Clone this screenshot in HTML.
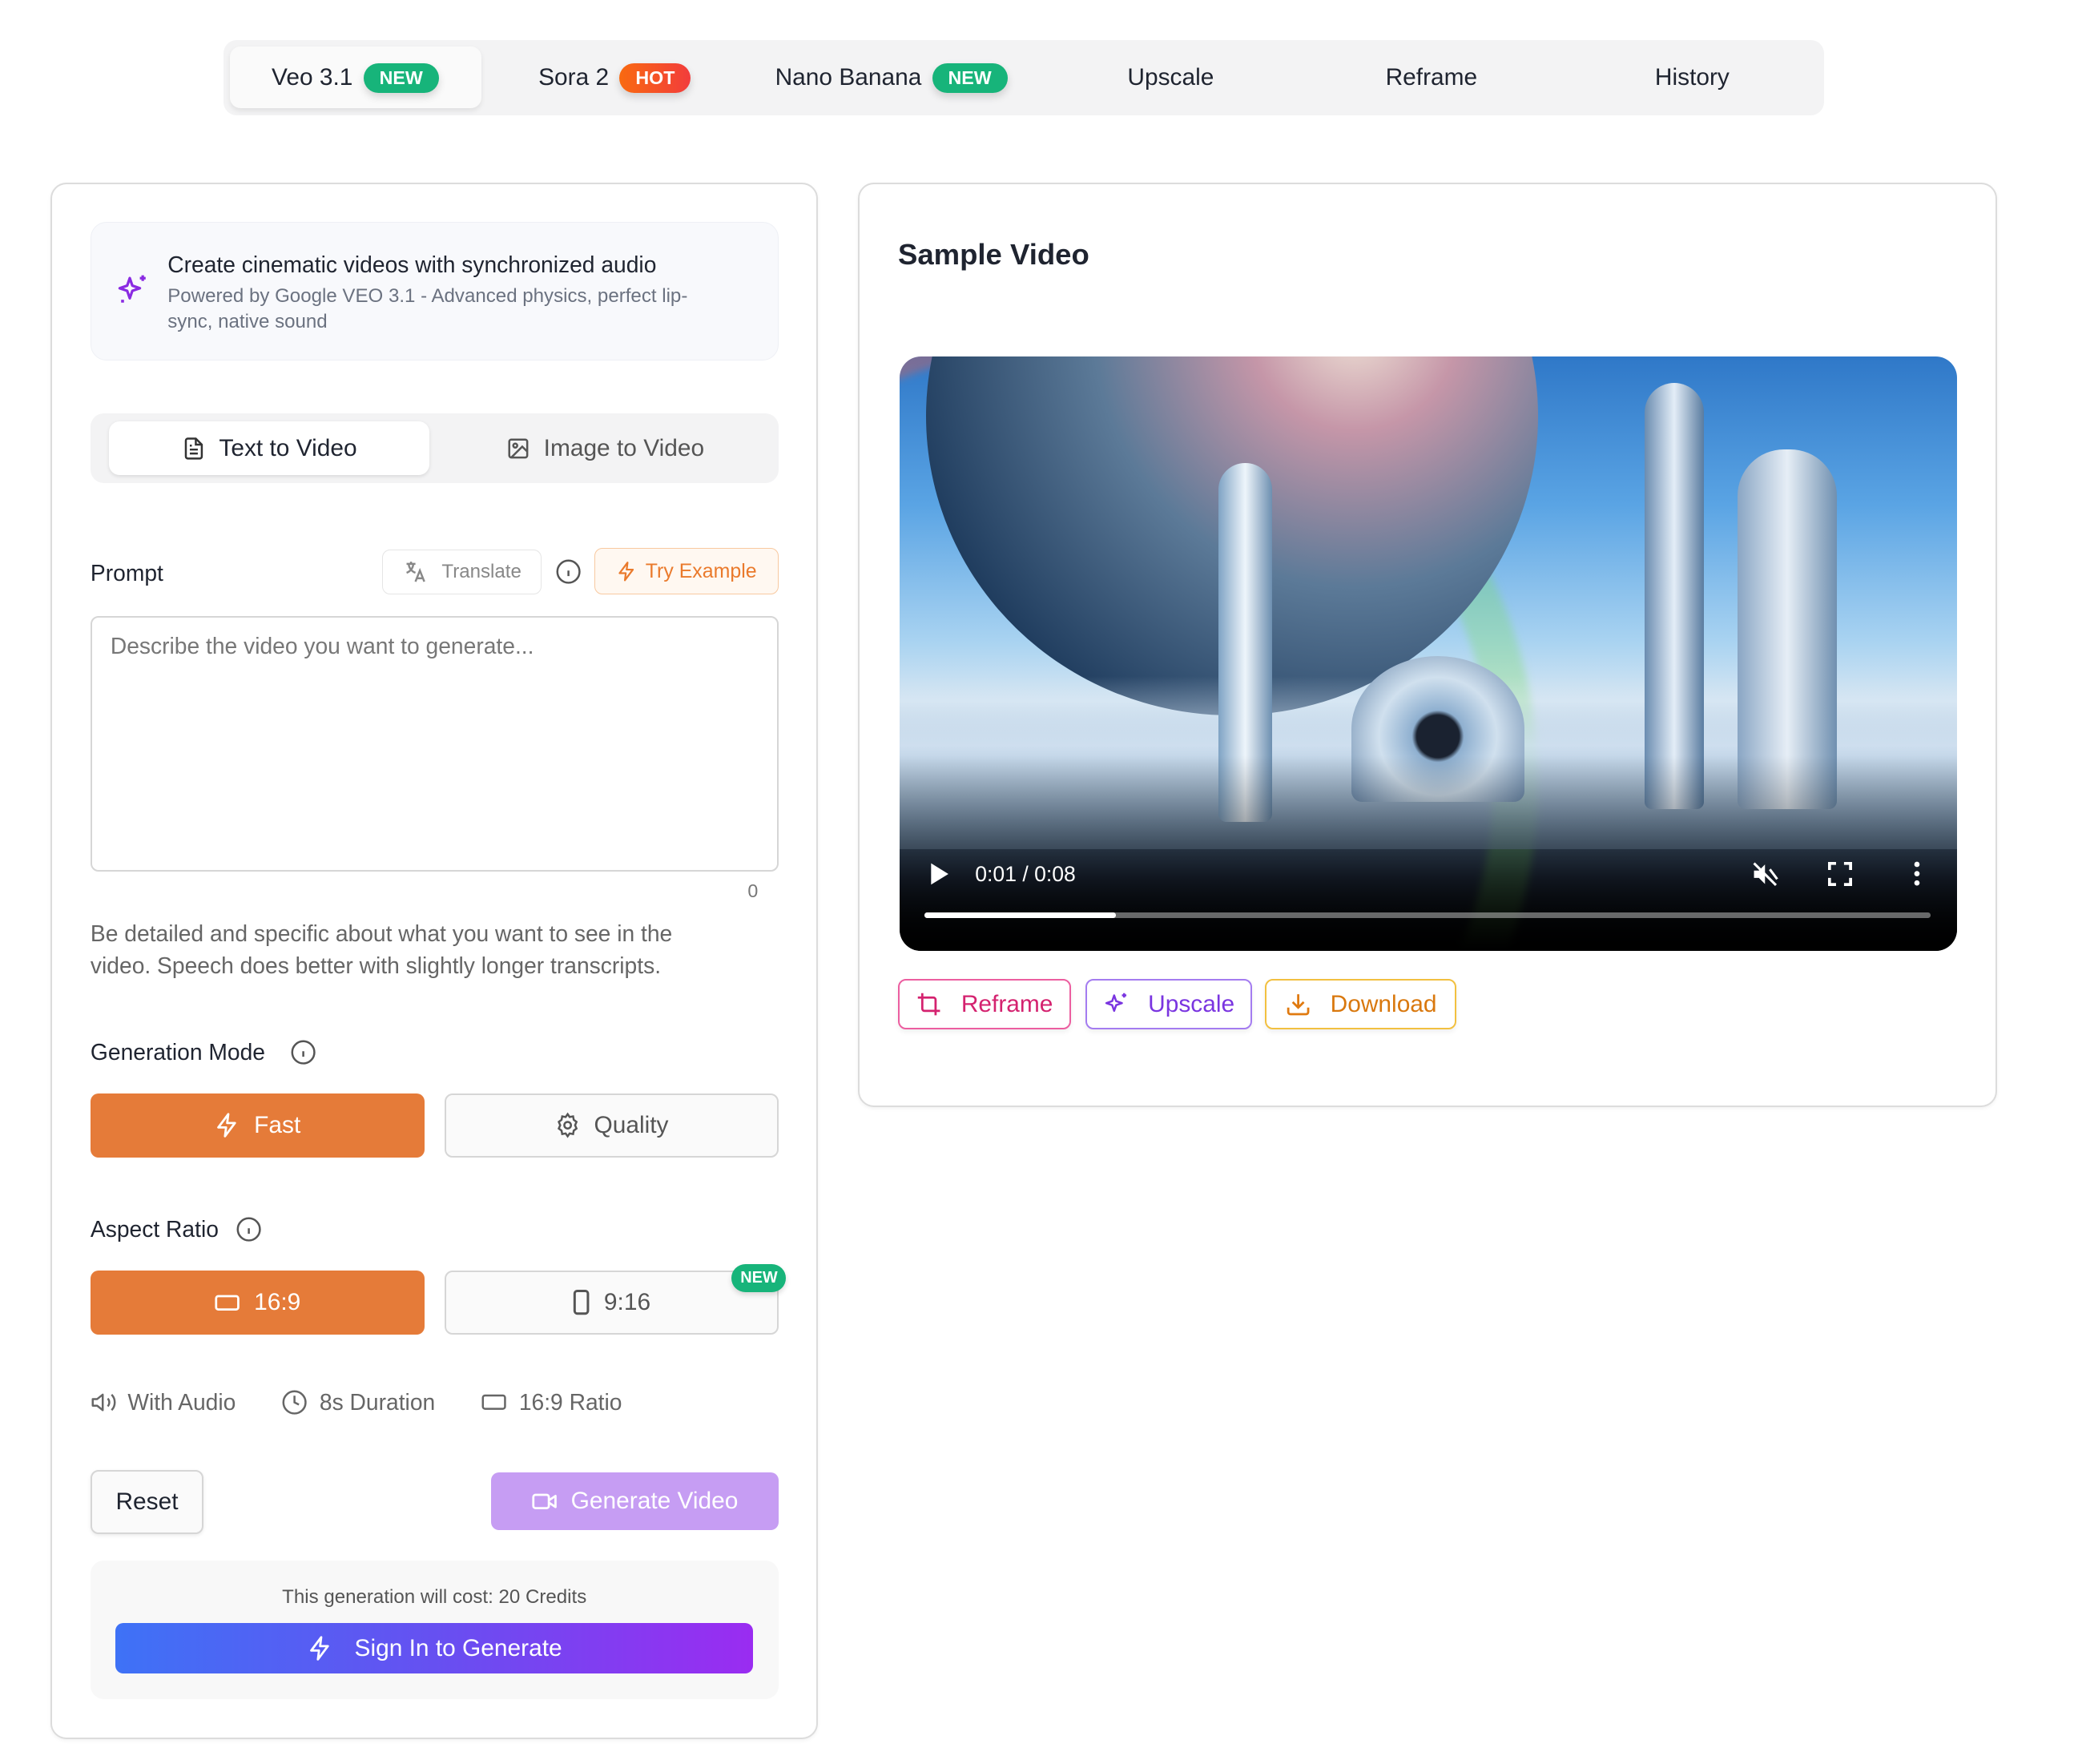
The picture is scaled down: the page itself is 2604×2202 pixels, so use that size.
<!DOCTYPE html>
<html><head><meta charset="utf-8"><style>
*{box-sizing:border-box;margin:0;padding:0}
html,body{width:2604px;height:2202px;overflow:hidden;background:#fff}
#root{zoom:1.66071;width:1568px;height:1326px;position:relative;font-family:"Liberation Sans",sans-serif;color:#1f2430}
.abs{position:absolute}
.tabs{left:168px;top:30px;width:1203px;height:57px;background:#f3f3f4;border-radius:10px}
.tab{position:absolute;top:0;height:57px;display:flex;align-items:center;justify-content:center;font-size:18px;color:#1f2430;gap:8px}
.badge{color:#fff;font-size:14px;font-weight:bold;padding:3px 12px;border-radius:14px;box-shadow:0 3px 6px rgba(0,0,0,.15)}
.card{border:1.5px solid #dcdcdc;border-radius:12px;background:#fff;box-shadow:0 1px 3px rgba(0,0,0,.05)}
.btn{position:absolute;display:flex;align-items:center;justify-content:center;gap:10px;border-radius:6px;font-size:18px}
svg{display:block}
</style></head><body><div id="root">

<div class="abs tabs">
 <div class="abs" style="left:5px;top:5px;width:189px;height:46px;background:#fafafa;border-radius:8px;box-shadow:0 2px 4px rgba(0,0,0,.08)"></div>
 <div class="tab" style="left:4px;width:190px">Veo 3.1 <span class="badge" style="background:#17b47a">NEW</span></div>
 <div class="tab" style="left:196px;width:196px">Sora 2 <span class="badge" style="background:linear-gradient(90deg,#f96a10,#f23c3c)">HOT</span></div>
 <div class="tab" style="left:392px;width:220px">Nano Banana <span class="badge" style="background:#17b47a">NEW</span></div>
 <div class="tab" style="left:612px;width:200px">Upscale</div>
 <div class="tab" style="left:810px;width:196px">Reframe</div>
 <div class="tab" style="left:1006px;width:196px">History</div>
</div>

<div class="abs card" style="left:38px;top:137px;width:577px;height:1170px"></div>
<div class="abs" style="left:68px;top:167px;width:517px;height:104px;background:#f8f9fc;border:1px solid #eef0f5;border-radius:12px"></div>
<svg class="abs" style="left:87px;top:205px" width="26" height="26" viewBox="0 0 24 24" fill="none" stroke="#8a2be2" stroke-width="1.8" stroke-linejoin="round"><path d="M10 4l1.8 5.2L17 11l-5.2 1.8L10 18l-1.8-5.2L3 11l5.2-1.8z"/><path d="M19 2v4M17 4h4M5 19v2M4 20h2"/></svg>
<div class="abs" style="left:126px;top:189px;font-size:17px;color:#1f2430">Create cinematic videos with synchronized audio</div>
<div class="abs" style="left:126px;top:213px;width:415px;font-size:14.5px;line-height:19.5px;color:#6b7280">Powered by Google VEO 3.1 - Advanced physics, perfect lip-sync, native sound</div>

<div class="abs" style="left:68px;top:311px;width:517px;height:52px;background:#f3f3f4;border-radius:10px"></div>
<div class="abs" style="left:82px;top:317px;width:241px;height:40px;background:#fff;border-radius:8px;box-shadow:0 1px 3px rgba(0,0,0,.1)"></div>
<div class="btn" style="left:82px;top:317px;width:241px;height:40px;color:#1f2430"><svg width="18" height="18" viewBox="0 0 24 24" fill="none" stroke="#333" stroke-width="2"><path d="M14 2H6a2 2 0 0 0-2 2v16a2 2 0 0 0 2 2h12a2 2 0 0 0 2-2V8z"/><path d="M14 2v6h6M8 13h8M8 17h8M8 9h2"/></svg>Text to Video</div>
<div class="btn" style="left:330px;top:317px;width:250px;height:40px;color:#555"><svg width="18" height="18" viewBox="0 0 24 24" fill="none" stroke="#555" stroke-width="2"><rect x="3" y="3" width="18" height="18" rx="2"/><circle cx="9" cy="9" r="2"/><path d="M21 15l-5-5L5 21"/></svg>Image to Video</div>

<div class="abs" style="left:68px;top:421px;font-size:17px">Prompt</div>
<div class="btn" style="left:287px;top:413px;width:120px;height:34px;border:1px solid #e5e5e5;font-size:14.5px;color:#888;gap:10px"><svg width="20" height="20" viewBox="0 0 24 24" fill="none" stroke="#888" stroke-width="1.8"><path d="M4 5h8M8 3v2M6 5c0 4 3 7 6 8M10 5c0 4-3 7-6 8M12 21l4-10 4 10M13.5 18h5"/></svg>Translate</div>
<svg class="abs" style="left:417px;top:420px" width="20" height="20" viewBox="0 0 24 24" fill="none" stroke="#555" stroke-width="1.8"><circle cx="12" cy="12" r="10"/><path d="M12 16v-5M12 8h.01"/></svg>
<div class="btn" style="left:447px;top:412px;width:138px;height:35px;border:1px solid #f8c9a0;background:#fff8f1;font-size:15px;color:#ea7a2c;gap:6px"><svg width="16" height="16" viewBox="0 0 24 24" fill="none" stroke="#ea7a2c" stroke-width="2" stroke-linejoin="round"><path d="M13 2L4 14h7l-1 8 9-12h-7z"/></svg>Try Example</div>

<div class="abs" style="left:68px;top:463px;width:517px;height:192px;border:1.5px solid #d6d6d6;border-radius:6px"></div>
<div class="abs" style="left:83px;top:476px;font-size:17px;color:#777">Describe the video you want to generate...</div>
<div class="abs" style="left:562px;top:662px;font-size:14px;color:#777">0</div>
<div class="abs" style="left:68px;top:690px;width:475px;font-size:17px;line-height:24px;color:#666">Be detailed and specific about what you want to see in the video. Speech does better with slightly longer transcripts.</div>

<div class="abs" style="left:68px;top:781px;font-size:17px">Generation Mode</div>
<svg class="abs" style="left:218px;top:781px" width="20" height="20" viewBox="0 0 24 24" fill="none" stroke="#555" stroke-width="1.8"><circle cx="12" cy="12" r="10"/><path d="M12 16v-5M12 8h.01"/></svg>
<div class="btn" style="left:68px;top:822px;width:251px;height:48px;background:#e57b39;color:#fff"><svg width="20" height="20" viewBox="0 0 24 24" fill="none" stroke="#fff" stroke-width="2" stroke-linejoin="round"><path d="M13 2L4 14h7l-1 8 9-12h-7z"/></svg>Fast</div>
<div class="btn" style="left:334px;top:822px;width:251px;height:48px;border:1.5px solid #d6d6d6;background:#fafafa;color:#555"><svg width="20" height="20" viewBox="0 0 24 24" fill="none" stroke="#555" stroke-width="1.8"><circle cx="12" cy="12" r="3"/><path d="M12 2l1.8 2.6 3.1-.6.6 3.1L20 9l-1.3 3 1.3 3-2.5 1.9-.6 3.1-3.1-.6L12 22l-1.8-2.6-3.1.6-.6-3.1L4 15l1.3-3L4 9l2.5-1.9.6-3.1 3.1.6z"/></svg>Quality</div>

<div class="abs" style="left:68px;top:914px;font-size:17px">Aspect Ratio</div>
<svg class="abs" style="left:177px;top:914px" width="20" height="20" viewBox="0 0 24 24" fill="none" stroke="#555" stroke-width="1.8"><circle cx="12" cy="12" r="10"/><path d="M12 16v-5M12 8h.01"/></svg>
<div class="btn" style="left:68px;top:955px;width:251px;height:48px;background:#e57b39;color:#fff"><svg width="20" height="16" viewBox="0 0 24 18" fill="none" stroke="#fff" stroke-width="2"><rect x="2" y="3" width="20" height="12" rx="2"/></svg>16:9</div>
<div class="btn" style="left:334px;top:955px;width:251px;height:48px;border:1.5px solid #d6d6d6;background:#fafafa;color:#555"><svg width="14" height="20" viewBox="0 0 14 20" fill="none" stroke="#555" stroke-width="1.8"><rect x="2" y="1.5" width="10" height="17" rx="2"/></svg>9:16</div>
<div class="abs" style="left:550px;top:950px;width:41px;height:21px;background:#17b47a;border-radius:11px;color:#fff;font-size:12px;font-weight:bold;display:flex;align-items:center;justify-content:center;box-shadow:0 2px 4px rgba(0,0,0,.15)">NEW</div>

<div class="abs" style="left:68px;top:1044px;display:flex;align-items:center;font-size:17px;color:#666">
<svg width="20" height="20" viewBox="0 0 24 24" fill="none" stroke="#666" stroke-width="1.8" stroke-linejoin="round"><path d="M11 5L6 9H2v6h4l5 4z"/><path d="M15.5 8.5a5 5 0 0 1 0 7M19 5a10 10 0 0 1 0 14"/></svg><span style="margin-left:8px">With Audio</span>
<svg style="margin-left:34px" width="20" height="20" viewBox="0 0 24 24" fill="none" stroke="#666" stroke-width="1.8"><circle cx="12" cy="12" r="10"/><path d="M12 6v6l4 2"/></svg><span style="margin-left:9px">8s Duration</span>
<svg style="margin-left:34px" width="20" height="16" viewBox="0 0 24 18" fill="none" stroke="#666" stroke-width="1.8"><rect x="2" y="3" width="20" height="12" rx="2"/></svg><span style="margin-left:9px">16:9 Ratio</span>
</div>

<div class="btn" style="left:68px;top:1105px;width:85px;height:48px;border:1.5px solid #d6d6d6;background:#fafafa;color:#1f2430;box-shadow:0 1px 3px rgba(0,0,0,.08)">Reset</div>
<div class="btn" style="left:369px;top:1107px;width:216px;height:43px;background:#c69df3;color:#fff"><svg width="20" height="16" viewBox="0 0 24 18" fill="none" stroke="#fff" stroke-width="2" stroke-linejoin="round"><rect x="2" y="3" width="14" height="12" rx="2"/><path d="M16 8l6-4v10l-6-4"/></svg>Generate Video</div>

<div class="abs" style="left:68px;top:1173px;width:517px;height:104px;background:#f8f8f8;border-radius:10px"></div>
<div class="abs" style="left:68px;top:1192px;width:517px;text-align:center;font-size:14.5px;color:#555">This generation will cost: 20 Credits</div>
<div class="btn" style="left:87px;top:1220px;width:479px;height:38px;background:linear-gradient(90deg,#3e72f6,#6650f1 50%,#9a2cf1);color:#fff;gap:16px"><svg width="20" height="20" viewBox="0 0 24 24" fill="none" stroke="#fff" stroke-width="2" stroke-linejoin="round"><path d="M13 2L4 14h7l-1 8 9-12h-7z"/></svg>Sign In to Generate</div>

<div class="abs card" style="left:645px;top:137px;width:856px;height:695px"></div>
<div class="abs" style="left:675px;top:179px;font-size:22px;font-weight:bold;color:#1f2430">Sample Video</div>
<div class="abs" style="left:676px;top:268px;width:795px;height:447px;border-radius:16px;overflow:hidden;background:linear-gradient(180deg,#2f78c8 0%,#5aa4e4 25%,#a9d3f1 48%,#d6e6f2 58%,#98b4cc 68%,#5a7896 78%,#26344a 88%,#000 100%)">
 <div class="abs" style="left:-240px;top:-40px;width:720px;height:720px;border-radius:50%;border:34px solid transparent;border-top-color:rgba(255,90,60,.35);border-right-color:rgba(120,220,90,.3);transform:rotate(10deg);filter:blur(3px)"></div>
 <div class="abs" style="left:20px;top:-180px;width:460px;height:450px;border-radius:50%;background:radial-gradient(circle at 70% 35%,#efe2d6 0%,#c596a8 18%,#5c7a98 45%,#1d3a5c 80%)"></div>
 <div class="abs" style="left:0;top:240px;width:795px;height:130px;background:linear-gradient(180deg,rgba(220,235,248,0),rgba(215,230,245,.8) 40%,rgba(130,160,190,.6))"></div>
 <div class="abs" style="left:240px;top:80px;width:40px;height:270px;background:linear-gradient(90deg,#7fa3c4,#eef5fb,#6d8fb0);border-radius:20px 20px 6px 6px"></div>
 <div class="abs" style="left:560px;top:20px;width:45px;height:320px;background:linear-gradient(90deg,#6a8cb0,#e3edf7,#5a7ca0);border-radius:25px 25px 6px 6px"></div>
 <div class="abs" style="left:630px;top:70px;width:75px;height:270px;background:linear-gradient(90deg,#8aa6c4,#e6eef6,#7090b0);border-radius:35px 35px 6px 6px"></div>
 <div class="abs" style="left:340px;top:225px;width:130px;height:110px;background:radial-gradient(circle at 50% 55%,#1a2230 18%,#8fb0d0 22%,#d0e0ee 50%,#5c7ea4);border-radius:50% 50% 8px 8px"></div>
 <div class="abs" style="left:0;top:300px;width:795px;height:147px;background:linear-gradient(180deg,rgba(0,0,0,0),rgba(0,0,0,.5) 55%,#000)"></div>
 <svg class="abs" style="left:22px;top:380px" width="16" height="18" viewBox="0 0 16 18"><path d="M2 1v16l13-8z" fill="#fff"/></svg>
 <div class="abs" style="left:57px;top:380px;color:#fff;font-size:16px">0:01 / 0:08</div>
 <svg class="abs" style="left:640px;top:378px" width="22" height="22" viewBox="0 0 24 24" fill="#fff"><path d="M3 9v6h4l5 5V4L7 9z"/><path d="M16 8l6 8M3 3l18 18" stroke="#fff" stroke-width="2"/></svg>
 <svg class="abs" style="left:698px;top:380px" width="18" height="18" viewBox="0 0 18 18" fill="none" stroke="#fff" stroke-width="2.4"><path d="M1 6V1h5M12 1h5v5M17 12v5h-5M6 17H1v-5"/></svg>
 <svg class="abs" style="left:762px;top:379px" width="6" height="20" viewBox="0 0 6 20" fill="#fff"><circle cx="3" cy="3" r="2"/><circle cx="3" cy="10" r="2"/><circle cx="3" cy="17" r="2"/></svg>
 <div class="abs" style="left:19px;top:418px;width:756px;height:4px;background:rgba(255,255,255,.4);border-radius:2px"><div style="width:144px;height:4px;background:#fff;border-radius:2px"></div></div>
</div>

<div class="btn" style="left:675px;top:736px;width:130px;height:38px;border:1.5px solid #ec5ea0;color:#d4226f;gap:14px;box-shadow:0 2px 4px rgba(0,0,0,.06)"><svg width="20" height="20" viewBox="0 0 24 24" fill="none" stroke="#d4226f" stroke-width="2"><path d="M6 2v14a2 2 0 0 0 2 2h14M18 22V8a2 2 0 0 0-2-2H2"/></svg>Reframe</div>
<div class="btn" style="left:816px;top:736px;width:125px;height:38px;border:1.5px solid #a47cf0;color:#7a35e0;gap:14px;box-shadow:0 2px 4px rgba(0,0,0,.06)"><svg width="20" height="20" viewBox="0 0 24 24" fill="none" stroke="#7a35e0" stroke-width="1.8" stroke-linejoin="round"><path d="M10 4l1.8 5.2L17 11l-5.2 1.8L10 18l-1.8-5.2L3 11l5.2-1.8z"/><path d="M19 2v4M17 4h4"/></svg>Upscale</div>
<div class="btn" style="left:951px;top:736px;width:144px;height:38px;border:1.5px solid #f2c040;color:#d9780e;gap:14px;box-shadow:0 2px 4px rgba(0,0,0,.06)"><svg width="20" height="20" viewBox="0 0 24 24" fill="none" stroke="#e07a10" stroke-width="2"><path d="M21 15v4a2 2 0 0 1-2 2H5a2 2 0 0 1-2-2v-4M7 10l5 5 5-5M12 15V3"/></svg>Download</div>

</div></body></html>
